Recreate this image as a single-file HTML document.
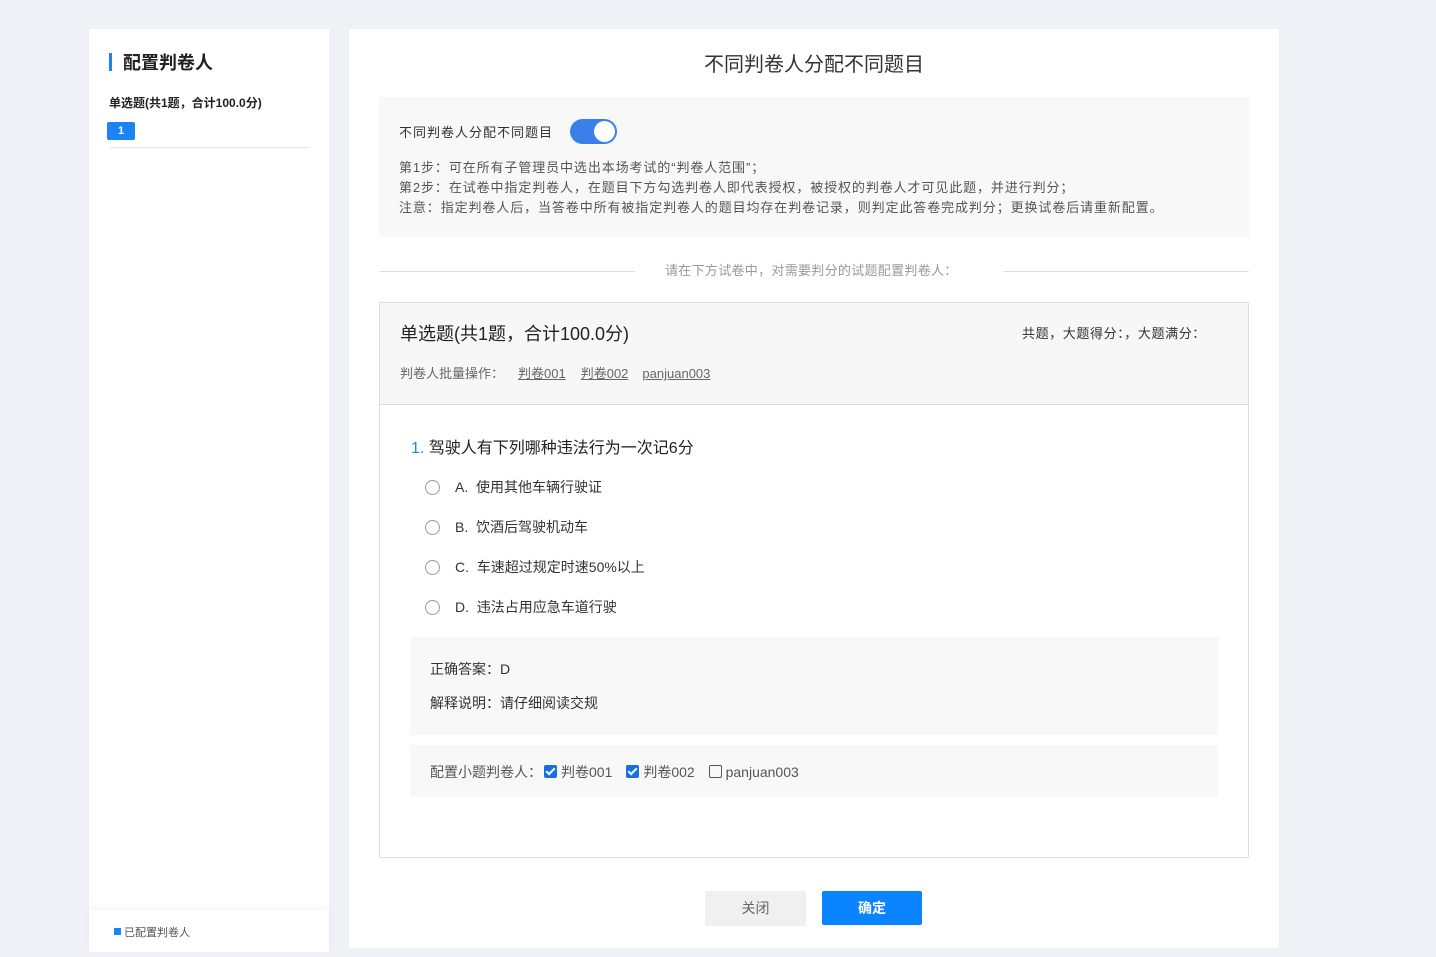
<!DOCTYPE html>
<html><head><meta charset="utf-8"><style>
*{box-sizing:border-box;margin:0;padding:0}
body{width:1436px;height:957px;background:#eff1f7;font-family:"Liberation Sans","Noto Sans CJK SC",sans-serif;color:#333;position:relative;overflow:hidden}
.abs{position:absolute}
.left{left:89px;top:29px;width:240px;height:923px;background:#fff}
.main{left:349px;top:29px;width:930px;height:919px;background:#fff}
.t{white-space:nowrap}
.radio{width:15px;height:15px;border:1px solid #999;border-radius:50%;position:absolute}
.cb{display:inline-block;width:13px;height:13px;border-radius:2px;vertical-align:-1px;margin-right:4px;position:relative}
.cb.on::after{content:"";position:absolute;left:4px;top:1px;width:3px;height:7px;border:solid #fff;border-width:0 2px 2px 0;transform:rotate(45deg)}
</style></head><body>
<div class="abs left">
  <div class="abs" style="left:20px;top:24px;width:3px;height:18px;background:#1a84f5"></div>
  <div class="abs t" style="left:34px;top:20px;font-size:18px;font-weight:bold;color:#222">配置判卷人</div>
  <div class="abs t" style="left:20px;top:65px;font-size:12px;font-weight:bold;color:#222">单选题(共1题，合计100.0分)</div>
  <div class="abs" style="left:18px;top:93px;width:28px;height:18px;background:#1a84f5;border-radius:2px;color:#fff;font-size:11px;font-weight:bold;text-align:center;line-height:18px">1</div>
  <div class="abs" style="left:20px;top:118px;width:200px;height:1px;background:#e6e6e6"></div>
  <div class="abs" style="left:0;top:882px;width:240px;height:41px;background:#fff;box-shadow:0 -4px 8px rgba(0,0,0,0.04)"></div>
  <div class="abs" style="left:25px;top:899px;width:7px;height:7px;background:#1a84f5"></div>
  <div class="abs t" style="left:35px;top:895px;font-size:11px;color:#555">已配置判卷人</div>
</div>
<div class="abs main">
  <div class="abs t" style="left:0;width:930px;text-align:center;top:19px;font-size:20px;color:#333">不同判卷人分配不同题目</div>
  <div class="abs" style="left:30px;top:68px;width:870px;height:140px;background:#f8f8f8"></div>
  <div class="abs t" style="left:50px;top:93px;font-size:13px;color:#333;letter-spacing:1px">不同判卷人分配不同题目</div>
  <div class="abs" style="left:221px;top:90px;width:47px;height:25px;border-radius:13px;background:#3a80e8"></div>
  <div class="abs" style="left:245px;top:92px;width:21px;height:21px;border-radius:50%;background:#fff"></div>
  <div class="abs t" style="left:50px;top:129px;font-size:13px;color:#555;line-height:20px;letter-spacing:0.9px">第1步：可在所有子管理员中选出本场考试的“判卷人范围”；<br>第2步：在试卷中指定判卷人，在题目下方勾选判卷人即代表授权，被授权的判卷人才可见此题，并进行判分；<br>注意：指定判卷人后，当答卷中所有被指定判卷人的题目均存在判卷记录，则判定此答卷完成判分；更换试卷后请重新配置。</div>
  <div class="abs" style="left:30px;top:242px;width:256px;height:1px;background:#e0e0e0"></div>
  <div class="abs" style="left:654px;top:242px;width:246px;height:1px;background:#e0e0e0"></div>
  <div class="abs t" style="left:316px;top:231px;font-size:13px;color:#999;letter-spacing:0.3px">请在下方试卷中，对需要判分的试题配置判卷人：</div>
  <div class="abs" style="left:30px;top:273px;width:870px;height:556px;border:1px solid #ddd;border-radius:2px"></div>
  <div class="abs" style="left:31px;top:274px;width:868px;height:102px;background:#f7f7f7;border-bottom:1px solid #ddd"></div>
  <div class="abs t" style="left:51px;top:291px;font-size:18px;color:#222">单选题(共1题，合计100.0分)</div>
  <div class="abs t" style="left:673px;top:294px;font-size:13px;color:#333;letter-spacing:0.6px">共题，大题得分：，大题满分：</div>
  <div class="abs t" style="left:51px;top:334px;font-size:13px;color:#666">判卷人批量操作：<span style="text-decoration:underline;margin-left:14px">判卷001</span><span style="text-decoration:underline;margin-left:15px">判卷002</span><span style="text-decoration:underline;margin-left:14px">panjuan003</span></div>
  <div class="abs t" style="left:62px;top:405px;font-size:16px;color:#222"><span style="color:#1a84f5">1.</span> 驾驶人有下列哪种违法行为一次记6分</div>
  <div class="radio" style="left:76px;top:451px"></div><div class="abs t" style="left:106px;top:448px;font-size:14px">A.&nbsp; 使用其他车辆行驶证</div>
  <div class="radio" style="left:76px;top:491px"></div><div class="abs t" style="left:106px;top:488px;font-size:14px">B.&nbsp; 饮酒后驾驶机动车</div>
  <div class="radio" style="left:76px;top:531px"></div><div class="abs t" style="left:106px;top:528px;font-size:14px">C.&nbsp; 车速超过规定时速50%以上</div>
  <div class="radio" style="left:76px;top:571px"></div><div class="abs t" style="left:106px;top:568px;font-size:14px">D.&nbsp; 违法占用应急车道行驶</div>
  <div class="abs" style="left:61px;top:608px;width:808px;height:98px;background:#f8f8f8"></div>
  <div class="abs t" style="left:81px;top:630px;font-size:14px">正确答案：D</div>
  <div class="abs t" style="left:81px;top:664px;font-size:14px">解释说明：请仔细阅读交规</div>
  <div class="abs" style="left:61px;top:716px;width:808px;height:52px;background:#f8f8f8"></div>
  <div class="abs t" style="left:81px;top:733px;font-size:14px;color:#555">配置小题判卷人：<span class="cb on" style="background:#1a6fe0;margin-left:2px"></span>判卷001<span class="cb on" style="background:#1a6fe0;margin-left:14px"></span>判卷002 <span class="cb" style="border:1px solid #555;margin-left:10px"></span>panjuan003</div>
  <div class="abs" style="left:356px;top:862px;width:101px;height:35px;background:#f0f0f0;border-radius:2px;text-align:center;line-height:35px;font-size:14px;color:#666">关闭</div>
  <div class="abs" style="left:473px;top:862px;width:100px;height:34px;background:#0a84ff;border-radius:2px;text-align:center;line-height:34px;font-size:14px;color:#fff;font-weight:bold">确定</div>
</div>
</body></html>
